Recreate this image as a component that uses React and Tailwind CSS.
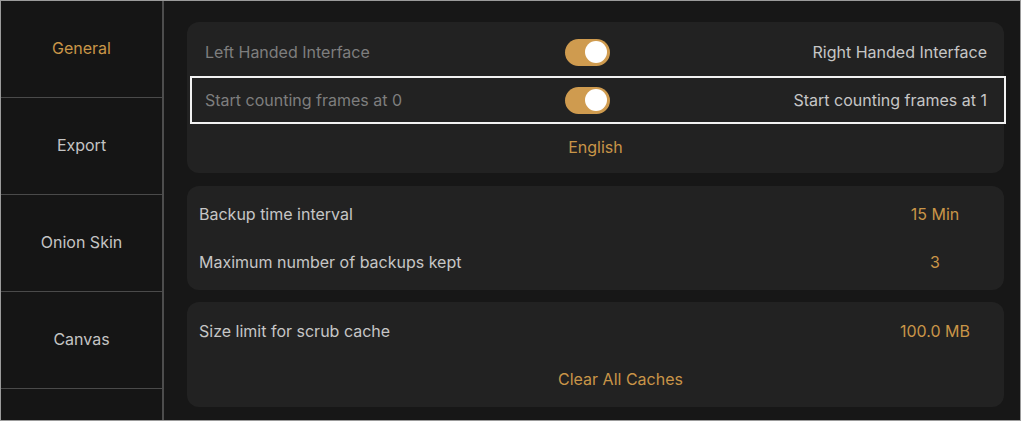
const gold = 'text-[#c99548]'

const tabs = ['General', 'Export', 'Onion Skin', 'Canvas']

function Toggle() {
  return (
    <div className="flex h-[27px] w-[45px] shrink-0 items-center justify-end rounded-full bg-[#cf9b4f] px-[3px]">
      <div className="h-[22px] w-[22px] rounded-full bg-white" />
    </div>
  )
}

function ToggleRow({ left, right, focused }) {
  return (
    <div
      className={`flex h-[48px] items-center ${
        focused ? 'ml-[3px] mr-[-2px] border-2 border-[#f2f2f2] pl-[13px] pr-[17px]' : 'pl-[18px] pr-[17px]'
      }`}
    >
      <span className="w-[360px] shrink-0 text-[#7e7e7e]">{left}</span>
      <Toggle />
      <span className="flex-1 text-right text-[#c6c6c6]">{right}</span>
    </div>
  )
}

function ValueRow({ label, value }) {
  return (
    <div className="flex h-[48px] items-center pl-[12px] pr-[19px]">
      <span className="flex-1 text-[#c6c6c6]">{label}</span>
      <span className={`w-[100px] text-center ${gold}`}>{value}</span>
    </div>
  )
}

export default function App() {
  return (
    <div
      className="flex h-[421px] w-[1021px] border border-[#9b9b9b] text-[16px]"
      style={{ fontFamily: 'Inter, "Noto Sans", sans-serif' }}
    >
      <nav className="w-[163px] shrink-0 border-r-2 border-[#4d4d4d] bg-[#151515]">
        {tabs.map((tab, index) => (
          <div
            className={`flex h-[97px] items-center justify-center border-b border-[#4a4a4a] pb-[2px] ${
              index === 0 ? gold : 'text-[#c4c4c4]'
            }`}
            key={tab}
          >
            {tab}
          </div>
        ))}
      </nav>

      <main className="flex flex-1 flex-col bg-[#171717] pl-[23px] pr-[16px] pt-[21px]">
        <section className="rounded-[12px] bg-[#222222] pb-[3px] pt-[6px]">
          <ToggleRow left="Left Handed Interface" right="Right Handed Interface" />
          <ToggleRow focused left="Start counting frames at 0" right="Start counting frames at 1" />
          <div className={`flex h-[46px] items-center justify-center ${gold}`}>English</div>
        </section>

        <section className="mt-[13px] rounded-[12px] bg-[#222222] py-[4px]">
          <ValueRow label="Backup time interval" value="15 Min" />
          <ValueRow label="Maximum number of backups kept" value="3" />
        </section>

        <section className="mt-[12px] rounded-[12px] bg-[#222222] pb-[4px] pt-[5px]">
          <ValueRow label="Size limit for scrub cache" value="100.0 MB" />
          <div className={`flex h-[48px] items-center justify-center pl-[50px] ${gold}`}>Clear All Caches</div>
        </section>
      </main>
    </div>
  )
}
